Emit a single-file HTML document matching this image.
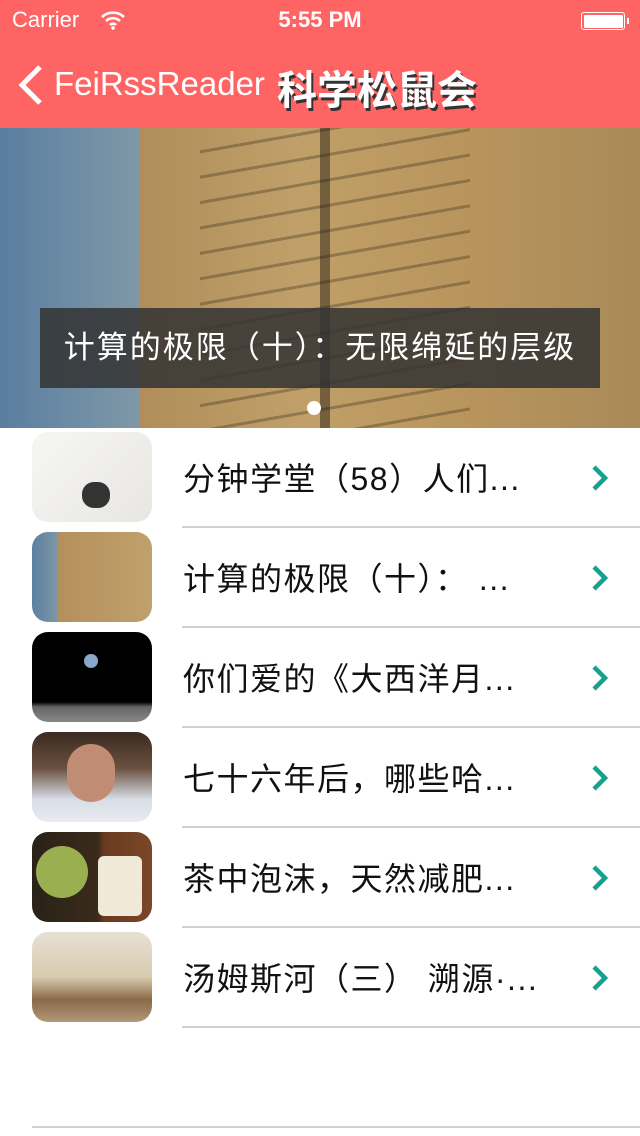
<!DOCTYPE html>
<html><head><meta charset="utf-8"><style>
*{margin:0;padding:0;box-sizing:border-box}
body{width:640px;height:1136px;background:#fff;position:relative;overflow:hidden;font-family:"Liberation Sans","Noto Sans CJK SC",sans-serif}
.hdr{position:absolute;left:0;top:0;width:640px;height:128px;background:#ff6464;color:#fff}
.abs{position:absolute}
.banner{position:absolute;left:0;top:128px;width:640px;height:300px;background:linear-gradient(90deg,#5a7ea0 0,#7f98a8 140px,#b08d5a 140px,#c0a068 300px,#b8945c 480px,#a88a58 640px);overflow:hidden}
.cap{position:absolute;left:40px;top:308px;width:560px;height:80px;background:rgba(50,50,50,.85);color:#fff;font-size:31px;line-height:80px;text-align:center;letter-spacing:2px;white-space:nowrap}
.row{position:absolute;left:0;width:640px;height:100px}
.th{position:absolute;left:32px;top:4px;width:120px;height:90px;border-radius:16px;overflow:hidden}
.t{position:absolute;left:183px;top:26px;font-size:32px;color:#111;white-space:nowrap;letter-spacing:1.5px}
.sep{position:absolute;left:182px;top:98px;width:458px;height:2px;background:#d0d0d0}
.chev{position:absolute;left:590px;top:36px}
</style></head><body>
<div class="hdr">
<div class="abs" style="left:12px;top:7px;font-size:22px">Carrier</div>
<svg class="abs" style="left:100px;top:10px" width="26" height="20" viewBox="0 0 26 20"><path d="M2 7a16 16 0 0 1 22 0M6 11a10 10 0 0 1 14 0M10 15a4 4 0 0 1 6 0" stroke="#fff" stroke-width="2.6" fill="none"/><circle cx="13" cy="18" r="1.8" fill="#fff"/></svg>
<div class="abs" style="left:0;width:640px;text-align:center;top:7px;font-size:22px;font-weight:bold">5:55 PM</div>
<div class="abs" style="left:581px;top:12px;width:44px;height:18px;border:1.5px solid #fff;border-radius:3px;padding:1.5px"><div style="width:100%;height:100%;background:#fff;border-radius:1px"></div></div>
<div class="abs" style="left:627px;top:18px;width:2px;height:6px;background:#fff"></div>
<svg class="abs" style="left:16px;top:64px" width="28" height="42" viewBox="0 0 28 42"><path d="M24 3L6 21l18 18" stroke="#fff" stroke-width="5" fill="none"/></svg>
<div class="abs" style="left:54px;top:65px;font-size:33px">FeiRssReader</div>
<div class="abs" style="left:277px;top:58px;font-size:40px;font-weight:bold;text-shadow:2px 3px 0 #333">科学松鼠会</div>
</div>
<div class="banner">
<div class="abs" style="left:200px;top:0;width:270px;height:300px;background:repeating-linear-gradient(170deg,transparent 0,transparent 22px,rgba(40,30,20,.3) 22px,rgba(40,30,20,.3) 25px)"></div>
<div class="abs" style="left:320px;top:0;width:10px;height:300px;background:rgba(40,30,20,.5)"></div>
</div>
<div class="cap">计算的极限（十）：无限绵延的层级</div>
<div class="abs" style="left:307px;top:401px;width:14px;height:14px;border-radius:7px;background:#fff"></div>

<div class="row" style="top:428px"><div class="th" style="background:linear-gradient(135deg,#f6f6f4,#e8e6e2);"><div class="abs" style="left:50px;top:50px;width:28px;height:26px;border-radius:12px;background:#333"></div></div><div class="t">分钟学堂（58）人们...</div><div class="sep"></div><svg class="chev" width="20" height="28"><path d="M4 3l11 11L4 25" stroke="#16a08e" stroke-width="4.5" fill="none"/></svg></div>
<div class="row" style="top:528px"><div class="th" style="background:linear-gradient(90deg,#5c80a0 0,#7b96a6 25px,#b48f5c 25px,#c0a06c 120px)"></div><div class="t">计算的极限（十）： ...</div><div class="sep"></div><svg class="chev" width="20" height="28"><path d="M4 3l11 11L4 25" stroke="#16a08e" stroke-width="4.5" fill="none"/></svg></div>
<div class="row" style="top:628px"><div class="th" style="background:linear-gradient(180deg,#000 0,#000 70px,#666 75px,#888 90px)"><div class="abs" style="left:52px;top:22px;width:14px;height:14px;border-radius:7px;background:#8aa8cc"></div></div><div class="t">你们爱的《大西洋月...</div><div class="sep"></div><svg class="chev" width="20" height="28"><path d="M4 3l11 11L4 25" stroke="#16a08e" stroke-width="4.5" fill="none"/></svg></div>
<div class="row" style="top:728px"><div class="th" style="background:linear-gradient(180deg,#3a2a20 0,#6a5040 40%,#d8dde6 75%,#e8ecf0 100%)"><div class="abs" style="left:35px;top:12px;width:48px;height:58px;border-radius:24px;background:#c08c74"></div></div><div class="t">七十六年后，哪些哈...</div><div class="sep"></div><svg class="chev" width="20" height="28"><path d="M4 3l11 11L4 25" stroke="#16a08e" stroke-width="4.5" fill="none"/></svg></div>
<div class="row" style="top:828px"><div class="th" style="background:linear-gradient(90deg,#2a2218 0,#3a2a1a 55%,#6a3a20 60%,#7a4828 100%)"><div class="abs" style="left:4px;top:14px;width:52px;height:52px;border-radius:26px;background:#9ab050"></div><div class="abs" style="left:66px;top:24px;width:44px;height:60px;border-radius:6px;background:#f0e8d8"></div></div><div class="t">茶中泡沫，天然减肥...</div><div class="sep"></div><svg class="chev" width="20" height="28"><path d="M4 3l11 11L4 25" stroke="#16a08e" stroke-width="4.5" fill="none"/></svg></div>
<div class="row" style="top:928px"><div class="th" style="background:linear-gradient(180deg,#e6e0d4 0,#d8cbb0 50%,#8a6a48 75%,#b09878 100%)"></div><div class="t">汤姆斯河（三） 溯源·...</div><div class="sep"></div><svg class="chev" width="20" height="28"><path d="M4 3l11 11L4 25" stroke="#16a08e" stroke-width="4.5" fill="none"/></svg></div>
<div class="abs" style="left:32px;top:1126px;width:608px;height:2px;background:#d0d0d0"></div>
</body></html>
